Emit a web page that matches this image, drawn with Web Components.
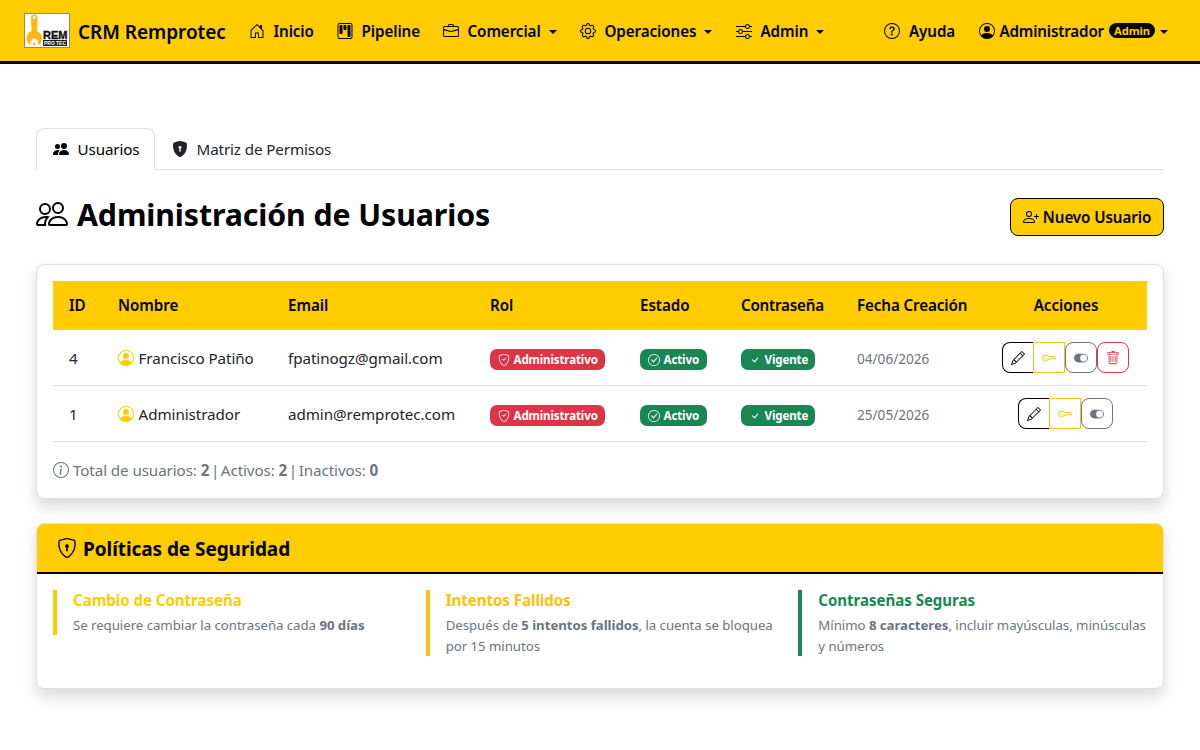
<!DOCTYPE html>
<html lang="es">
<head>
<meta charset="utf-8">
<title>CRM Remprotec - Usuarios</title>
<style>
:root{
    --yellow: #ffcc00;
    --amber: #ffc107;
    --green: #198754;
    --red: #dc3545;
    --grey: #6c757d;
    --line: #dee2e6;
}

body{
    margin: 0;
    background: #fff;
    color: #212529;
    font: 15.2px/24px "Noto Sans", "Open Sans", sans-serif;
    letter-spacing: -0.07px;
}

main{
    padding: 64px 36px 0;
}

.title-row{
    display: flex;
    justify-content: space-between;
    align-items: center;
    height: 46px;
    margin: 24px 0;
}

h1{
    display: flex;
    align-items: center;
    gap: 9px;
    margin: 0 0 4px;
    color: #000;
    font-size: 30.3px;
    font-weight: 700;
    line-height: 38px;
    letter-spacing: -0.11px;

    & crm-icon{ margin-top: -2px; }
}

.total{
    display: flex;
    align-items: center;
    gap: 4px;
    margin-top: 16px;
    color: var(--grey);
    letter-spacing: -0.1px;

    & i{
        margin: 0 -2.2px;
        font-style: normal;
    }
}

.policies{
    display: grid;
    grid-template-columns: repeat(3, 1fr);
    gap: 24px;
    align-items: start;
    padding-bottom: 16px;
}
</style>
</head>
<body>

<crm-navbar>
    <nav-item icon="house" style="width:88px">Inicio</nav-item>
    <nav-item icon="kanban" style="width:106px">Pipeline</nav-item>
    <nav-item icon="briefcase" style="width:137px" menu>Comercial</nav-item>
    <nav-item icon="gear" style="width:156px" menu>Operaciones</nav-item>
    <nav-item icon="sliders" menu>Admin</nav-item>
    <nav-item slot="user" icon="question" style="width:95px">Ayuda</nav-item>
    <nav-item slot="user" icon="person" badge="Admin" menu>Administrador</nav-item>
</crm-navbar>

<main>
    <crm-tabs>
        <crm-tab icon="people-fill" active>Usuarios</crm-tab>
        <crm-tab icon="shield-lock-fill">Matriz de Permisos</crm-tab>
    </crm-tabs>

    <div class="title-row">
        <h1><crm-icon name="people" size="32"></crm-icon>Administración de Usuarios</h1>
        <crm-button icon="person-plus">Nuevo Usuario</crm-button>
    </div>

    <crm-card>
        <user-table>
            <user-row uid="4" name="Francisco Patiño" email="fpatinogz@gmail.com" created="04/06/2026" removable></user-row>
            <user-row uid="1" name="Administrador" email="admin@remprotec.com" created="25/05/2026"></user-row>
        </user-table>
        <div class="total">
            <crm-icon name="info"></crm-icon>
            <span>Total de usuarios: <b>2</b> <i>|</i> Activos: <b>2</b> <i>|</i> Inactivos: <b>0</b></span>
        </div>
    </crm-card>

    <crm-card icon="shield-lock" heading="Políticas de Seguridad">
        <div class="policies">
            <policy-item heading="Cambio de Contraseña" style="--accent:var(--yellow)">Se requiere cambiar la contraseña cada <b>90 días</b></policy-item>
            <policy-item heading="Intentos Fallidos" style="--accent:var(--amber)">Después de <b>5 intentos fallidos</b>, la cuenta se bloquea por 15 minutos</policy-item>
            <policy-item heading="Contraseñas Seguras" style="--accent:var(--green)">Mínimo <b>8 caracteres</b>, incluir mayúsculas, minúsculas y números</policy-item>
        </div>
    </crm-card>
</main>

<script>
const icons = {
    "house": `<path d="M8.354 1.146a.5.5 0 0 0-.708 0l-6 6A.5.5 0 0 0 1.5 7.5v7a.5.5 0 0 0 .5.5h4.5a.5.5 0 0 0 .5-.5v-4h2v4a.5.5 0 0 0 .5.5H14a.5.5 0 0 0 .5-.5v-7a.5.5 0 0 0-.146-.354L13 5.793V2.5a.5.5 0 0 0-.5-.5h-1a.5.5 0 0 0-.5.5v1.293zM2.5 14V7.707l5.5-5.5 5.5 5.5V14H10v-4a.5.5 0 0 0-.5-.5h-3a.5.5 0 0 0-.5.5v4z"/>`,
    "kanban": `<path d="M13.5 1a1 1 0 0 1 1 1v12a1 1 0 0 1-1 1h-11a1 1 0 0 1-1-1V2a1 1 0 0 1 1-1zm-11-1a2 2 0 0 0-2 2v12a2 2 0 0 0 2 2h11a2 2 0 0 0 2-2V2a2 2 0 0 0-2-2z"/><path d="M6.5 3a1 1 0 0 1 1-1h1a1 1 0 0 1 1 1v3a1 1 0 0 1-1 1h-1a1 1 0 0 1-1-1zm-4 0a1 1 0 0 1 1-1h1a1 1 0 0 1 1 1v7a1 1 0 0 1-1 1h-1a1 1 0 0 1-1-1zm8 0a1 1 0 0 1 1-1h1a1 1 0 0 1 1 1v10a1 1 0 0 1-1 1h-1a1 1 0 0 1-1-1z"/>`,
    "briefcase": `<path d="M6.5 1A1.5 1.5 0 0 0 5 2.5V3H1.5A1.5 1.5 0 0 0 0 4.5v8A1.5 1.5 0 0 0 1.5 14h13a1.5 1.5 0 0 0 1.5-1.5v-8A1.5 1.5 0 0 0 14.5 3H11v-.5A1.5 1.5 0 0 0 9.5 1zm0 1h3a.5.5 0 0 1 .5.5V3H6v-.5a.5.5 0 0 1 .5-.5m1.886 6.914L15 7.151V12.5a.5.5 0 0 1-.5.5h-13a.5.5 0 0 1-.5-.5V7.15l6.614 1.764a1.5 1.5 0 0 0 .772 0M1.5 4h13a.5.5 0 0 1 .5.5v1.616L8.129 7.948a.5.5 0 0 1-.258 0L1 6.116V4.5a.5.5 0 0 1 .5-.5"/>`,
    "gear": `<path d="M8 4.754a3.246 3.246 0 1 0 0 6.492 3.246 3.246 0 0 0 0-6.492M5.754 8a2.246 2.246 0 1 1 4.492 0 2.246 2.246 0 0 1-4.492 0"/><path d="M9.796 1.343c-.527-1.79-3.065-1.79-3.592 0l-.094.319a.873.873 0 0 1-1.255.52l-.292-.16c-1.64-.892-3.433.902-2.54 2.541l.159.292a.873.873 0 0 1-.52 1.255l-.319.094c-1.79.527-1.79 3.065 0 3.592l.319.094a.873.873 0 0 1 .52 1.255l-.16.292c-.892 1.64.901 3.434 2.541 2.54l.292-.159a.873.873 0 0 1 1.255.52l.094.319c.527 1.79 3.065 1.79 3.592 0l.094-.319a.873.873 0 0 1 1.255-.52l.292.16c1.64.893 3.434-.902 2.54-2.541l-.159-.292a.873.873 0 0 1 .52-1.255l.319-.094c1.79-.527 1.79-3.065 0-3.592l-.319-.094a.873.873 0 0 1-.52-1.255l.16-.292c.893-1.64-.902-3.433-2.541-2.54l-.292.159a.873.873 0 0 1-1.255-.52zm-2.633.283c.246-.835 1.428-.835 1.674 0l.094.319a1.873 1.873 0 0 0 2.693 1.115l.291-.16c.764-.415 1.6.42 1.184 1.185l-.159.292a1.873 1.873 0 0 0 1.116 2.692l.318.094c.835.246.835 1.428 0 1.674l-.319.094a1.873 1.873 0 0 0-1.115 2.693l.16.291c.415.764-.42 1.6-1.185 1.184l-.291-.159a1.873 1.873 0 0 0-2.693 1.116l-.094.318c-.246.835-1.428.835-1.674 0l-.094-.319a1.873 1.873 0 0 0-2.692-1.115l-.292.16c-.764.415-1.6-.42-1.184-1.185l.159-.291A1.873 1.873 0 0 0 1.945 8.93l-.319-.094c-.835-.246-.835-1.428 0-1.674l.319-.094A1.873 1.873 0 0 0 3.06 4.377l-.16-.292c-.415-.764.42-1.6 1.185-1.184l.292.159a1.873 1.873 0 0 0 2.692-1.115z"/>`,
    "sliders": `<path fill-rule="evenodd" d="M11.5 2a1.5 1.5 0 1 0 0 3 1.5 1.5 0 0 0 0-3M9.05 3a2.5 2.5 0 0 1 4.9 0H16v1h-2.05a2.5 2.5 0 0 1-4.9 0H0V3zM4.5 7a1.5 1.5 0 1 0 0 3 1.5 1.5 0 0 0 0-3M2.05 8a2.5 2.5 0 0 1 4.9 0H16v1H6.95a2.5 2.5 0 0 1-4.9 0H0V8zm9.45 4a1.5 1.5 0 1 0 0 3 1.5 1.5 0 0 0 0-3m-2.45 1a2.5 2.5 0 0 1 4.9 0H16v1h-2.05a2.5 2.5 0 0 1-4.9 0H0v-1z"/>`,
    "question": `<path d="M8 15A7 7 0 1 1 8 1a7 7 0 0 1 0 14m0 1A8 8 0 1 0 8 0a8 8 0 0 0 0 16"/><path d="M5.255 5.786a.237.237 0 0 0 .241.247h.825c.138 0 .248-.113.266-.25.09-.656.54-1.134 1.342-1.134.686 0 1.314.343 1.314 1.168 0 .635-.374.927-.965 1.371-.673.489-1.206 1.06-1.168 1.987l.003.217a.25.25 0 0 0 .25.246h.811a.25.25 0 0 0 .25-.25v-.105c0-.718.273-.927 1.01-1.486.609-.463 1.244-.977 1.244-2.056 0-1.511-1.276-2.241-2.673-2.241-1.267 0-2.655.59-2.75 2.286m1.557 5.763c0 .533.425.927 1.01.927.609 0 1.028-.394 1.028-.927 0-.552-.42-.94-1.029-.94-.584 0-1.009.388-1.009.94"/>`,
    "person": `<path d="M11 6a3 3 0 1 1-6 0 3 3 0 0 1 6 0"/><path fill-rule="evenodd" d="M0 8a8 8 0 1 1 16 0A8 8 0 0 1 0 8m8-7a7 7 0 0 0-5.468 11.37C3.242 11.226 4.805 10 8 10s4.757 1.225 5.468 2.37A7 7 0 0 0 8 1"/>`,
    "people-fill": `<path d="M7 14s-1 0-1-1 1-4 5-4 5 3 5 4-1 1-1 1zm4-6a3 3 0 1 0 0-6 3 3 0 0 0 0 6m-5.784 6A2.24 2.24 0 0 1 5 13c0-1.355.68-2.75 1.936-3.72A6.3 6.3 0 0 0 5 9c-4 0-5 3-5 4s1 1 1 1zM4.5 8a2.5 2.5 0 1 0 0-5 2.5 2.5 0 0 0 0 5"/>`,
    "people": `<path d="M15 14s1 0 1-1-1-4-5-4-5 3-5 4 1 1 1 1zm-7.978-1L7 12.996c.001-.264.167-1.03.76-1.72C8.312 10.629 9.282 10 11 10c1.717 0 2.687.63 3.24 1.276.593.69.758 1.457.76 1.72l-.008.002-.014.002zM11 7a2 2 0 1 0 0-4 2 2 0 0 0 0 4m3-2a3 3 0 1 1-6 0 3 3 0 0 1 6 0M6.936 9.28a6 6 0 0 0-1.23-.247A7 7 0 0 0 5 9c-4 0-5 3-5 4q0 1 1 1h4.216A2.24 2.24 0 0 1 5 13c0-1.01.377-2.042 1.09-2.904.243-.294.526-.569.846-.816M4.92 10A5.5 5.5 0 0 0 4 13H1c0-.26.164-1.03.76-1.724.545-.636 1.492-1.256 3.16-1.275ZM1.5 5.5a3 3 0 1 1 6 0 3 3 0 0 1-6 0m3-2a2 2 0 1 0 0 4 2 2 0 0 0 0-4"/>`,
    "person-plus": `<path d="M6 8a3 3 0 1 0 0-6 3 3 0 0 0 0 6m2-3a2 2 0 1 1-4 0 2 2 0 0 1 4 0m4 8c0 1-1 1-1 1H1s-1 0-1-1 1-4 6-4 6 3 6 4m-1-.004c-.001-.246-.154-.986-.832-1.664C9.516 10.68 8.289 10 6 10s-3.516.68-4.168 1.332c-.678.678-.83 1.418-.832 1.664z"/><path fill-rule="evenodd" d="M13.5 5a.5.5 0 0 1 .5.5V7h1.5a.5.5 0 0 1 0 1H14v1.5a.5.5 0 0 1-1 0V8h-1.5a.5.5 0 0 1 0-1H13V5.5a.5.5 0 0 1 .5-.5"/>`,
    "shield-lock-fill": `<path fill-rule="evenodd" d="M8 0c-.69 0-1.843.265-2.928.56-1.11.3-2.229.655-2.887.87a1.54 1.54 0 0 0-1.044 1.262c-.596 4.477.787 7.795 2.465 9.99a11.8 11.8 0 0 0 2.517 2.453c.386.273.744.482 1.048.625.28.132.581.24.829.24s.548-.108.829-.24a7 7 0 0 0 1.048-.625 11.8 11.8 0 0 0 2.517-2.453c1.678-2.195 3.061-5.513 2.465-9.99a1.54 1.54 0 0 0-1.044-1.263 63 63 0 0 0-2.887-.87C9.843.266 8.69 0 8 0m0 5a1.5 1.5 0 0 1 .5 2.915l.385 1.99a.5.5 0 0 1-.491.595h-.788a.5.5 0 0 1-.49-.595l.384-1.99A1.5 1.5 0 0 1 8 5"/>`,
    "shield": `<path d="M5.338 1.59a61 61 0 0 0-2.837.856.48.48 0 0 0-.328.39c-.554 4.157.726 7.19 2.253 9.188a10.7 10.7 0 0 0 2.287 2.233c.346.244.652.42.893.533q.18.085.293.118a1 1 0 0 0 .101.025 1 1 0 0 0 .1-.025q.114-.034.294-.118c.24-.113.547-.29.893-.533a10.7 10.7 0 0 0 2.287-2.233c1.527-1.997 2.807-5.031 2.253-9.188a.48.48 0 0 0-.328-.39c-.651-.213-1.75-.56-2.837-.855C9.552 1.29 8.531 1.067 8 1.067c-.53 0-1.552.223-2.662.524zM5.072.56C6.157.265 7.31 0 8 0s1.843.265 2.928.56c1.11.3 2.229.655 2.887.87a1.54 1.54 0 0 1 1.044 1.262c.596 4.477-.787 7.795-2.465 9.99a11.8 11.8 0 0 1-2.517 2.453 7 7 0 0 1-1.048.625c-.28.132-.581.24-.829.24s-.548-.108-.829-.24a7 7 0 0 1-1.048-.625 11.8 11.8 0 0 1-2.517-2.453C1.928 10.487.545 7.169 1.141 2.692A1.54 1.54 0 0 1 2.185 1.43 63 63 0 0 1 5.072.56"/>`,
    "circle-check": `<path d="M8 15A7 7 0 1 1 8 1a7 7 0 0 1 0 14m0 1A8 8 0 1 0 8 0a8 8 0 0 0 0 16"/><path d="m10.97 4.97-.02.022-3.473 4.425-2.093-2.094a.75.75 0 0 0-1.06 1.06L6.97 11.03a.75.75 0 0 0 1.079-.02l3.992-4.99a.75.75 0 0 0-1.071-1.05"/>`,
    "check": `<path d="M10.97 4.97a.75.75 0 0 1 1.07 1.05l-3.99 4.99a.75.75 0 0 1-1.08.02L4.324 8.384a.75.75 0 1 1 1.06-1.06l2.094 2.093 3.473-4.425z"/>`,
    "pencil": `<path d="M12.146.146a.5.5 0 0 1 .708 0l3 3a.5.5 0 0 1 0 .708l-10 10a.5.5 0 0 1-.168.11l-5 2a.5.5 0 0 1-.65-.65l2-5a.5.5 0 0 1 .11-.168zM11.207 2.5 13.5 4.793 14.793 3.5 12.5 1.207zm1.586 3L10.5 3.207 4 9.707V10h.5a.5.5 0 0 1 .5.5v.5h.5a.5.5 0 0 1 .5.5v.5h.293zm-9.761 5.175-.106.106-1.528 3.821 3.821-1.528.106-.106A.5.5 0 0 1 5 12.5V12h-.5a.5.5 0 0 1-.5-.5V11h-.5a.5.5 0 0 1-.468-.325"/>`,
    "key": `<path d="M0 8a4 4 0 0 1 7.465-2H14a.5.5 0 0 1 .354.146l1.5 1.5a.5.5 0 0 1 0 .708l-1.5 1.5a.5.5 0 0 1-.708 0L13 9.207l-.646.647a.5.5 0 0 1-.708 0L11 9.207l-.646.647a.5.5 0 0 1-.708 0L9 9.207l-.646.647A.5.5 0 0 1 8 10h-.535A4 4 0 0 1 0 8m4-3a3 3 0 1 0 2.712 4.285A.5.5 0 0 1 7.163 9h.63l.853-.854a.5.5 0 0 1 .708 0l.646.647.646-.647a.5.5 0 0 1 .708 0l.646.647.646-.647a.5.5 0 0 1 .708 0l.646.647.793-.793-1-1h-6.63a.5.5 0 0 1-.451-.285A3 3 0 0 0 4 5"/><path d="M4 8a1 1 0 1 1-2 0 1 1 0 0 1 2 0"/>`,
    "toggle": `<path d="M5 3a5 5 0 0 0 0 10h6a5 5 0 0 0 0-10zm6 9a4 4 0 1 1 0-8 4 4 0 0 1 0 8"/>`,
    "trash": `<path d="M5.5 5.5A.5.5 0 0 1 6 6v6a.5.5 0 0 1-1 0V6a.5.5 0 0 1 .5-.5m2.5 0a.5.5 0 0 1 .5.5v6a.5.5 0 0 1-1 0V6a.5.5 0 0 1 .5-.5m3 .5a.5.5 0 0 0-1 0v6a.5.5 0 0 0 1 0z"/><path d="M14.5 3a1 1 0 0 1-1 1H13v9a2 2 0 0 1-2 2H5a2 2 0 0 1-2-2V4h-.5a1 1 0 0 1-1-1V2a1 1 0 0 1 1-1H6a1 1 0 0 1 1-1h2a1 1 0 0 1 1 1h3.5a1 1 0 0 1 1 1zM4.118 4 4 4.059V13a1 1 0 0 0 1 1h6a1 1 0 0 0 1-1V4.059L11.882 4zM2.5 3h11V2h-11z"/>`,
    "info": `<path d="M8 15A7 7 0 1 1 8 1a7 7 0 0 1 0 14m0 1A8 8 0 1 0 8 0a8 8 0 0 0 0 16"/><path d="m8.93 6.588-2.29.287-.082.38.45.083c.294.07.352.176.288.469l-.738 3.468c-.194.897.105 1.319.808 1.319.545 0 1.178-.252 1.465-.598l.088-.416c-.2.176-.492.246-.686.246-.275 0-.375-.193-.304-.533zM9 4.5a1 1 0 1 1-2 0 1 1 0 0 1 2 0"/>`
};
icons["shield-lock"] = icons["shield"] + `<path d="M9.5 6.5a1.5 1.5 0 0 1-1 1.415l.385 1.99a.5.5 0 0 1-.491.595h-.788a.5.5 0 0 1-.49-.595l.384-1.99a1.5 1.5 0 1 1 2-1.415"/>`;
icons["shield-check"] = icons["shield"] + `<path d="M10.854 5.146a.5.5 0 0 1 0 .708l-3 3a.5.5 0 0 1-.708 0l-1.5-1.5a.5.5 0 1 1 .708-.708L7.5 7.793l2.646-2.647a.5.5 0 0 1 .708 0"/>`;

class CrmIcon extends HTMLElement
{
    constructor()
    {
        super();
        const size = this.getAttribute("size") || 16;

        this.attachShadow({ mode : "open" }).innerHTML =
        `
        <style>
        :host{ display: block; flex: none; }
        svg{ display: block; }
        </style>
        <svg width="${size}" height="${size}" viewBox="0 0 16 16" fill="currentColor">${icons[this.getAttribute("name")]}</svg>
        `
    }
}
window.customElements.define('crm-icon', CrmIcon);


class CrmNavbar extends HTMLElement
{
    constructor()
    {
        super();
        this.attachShadow({ mode : "open" }).innerHTML =
        `
        <style>
        :host{
            display: flex;
            align-items: center;
            box-sizing: border-box;
            height: 64px;
            padding: 0 32px 0 24px;
            background: var(--yellow);
            border-bottom: 3px solid #000;
            color: #000;
        }

        .logo{
            display: block;
            margin-right: 8px;
            overflow: visible;
            letter-spacing: 0;
        }

        .brand{
            width: 171px;
            font-size: 19px;
            font-weight: 600;
            white-space: nowrap;
            padding-top: 2px;
            letter-spacing: -0.04px;
        }

        nav{
            display: flex;
            flex: 1;
        }

        .user{
            display: flex;
        }
        </style>

        <svg class="logo" width="46" height="36" viewBox="0 0 46 36">
            <rect x=".5" y=".5" width="45" height="34" fill="#fff" stroke="#8f8a70"/>
            <path fill="#fdb813" d="M10.3 1.6c-1.9 0-3.3 1.3-3.3 3.2l.6 13.3c-3 1.2-5 4-5 7.2 0 3.1 1.7 5.700 4.100 7.100v-4l1.700-2.600h3.800l1.700 2.600v4c2.400-1.400 4.100-4 4.100-7.100 0-3.200-2-6-5-7.200l.6-13.300c0-1.900-1.400-3.200-3.300-3.200zm0 1.500a1.400 1.400 0 1 1 0 2.800 1.400 1.400 0 0 1 0-2.800z"/>
            <circle cx="10.3" cy="31" r="1.3" fill="#fdb813"/>
            <text x="19" y="26" font-family="Liberation Sans" font-size="11.5" font-weight="700" fill="#111" stroke="#111" stroke-width=".4" textLength="24.500" lengthAdjust="spacingAndGlyphs">REM</text>
            <path fill="#222" d="M19 27h24v6H19z"/>
            <text x="20" y="32.100" font-family="Liberation Sans" font-size="6" font-weight="700" fill="#fff" textLength="22" lengthAdjust="spacingAndGlyphs">PRO TEC</text>
        </svg>
        <div class="brand">CRM Remprotec</div>
        <nav><slot></slot></nav>
        <div class="user"><slot name="user"></slot></div>
        `
    }
}
window.customElements.define('crm-navbar', CrmNavbar);


class NavItem extends HTMLElement
{
    constructor()
    {
        super();
        const badge = this.getAttribute("badge");

        this.attachShadow({ mode : "open" }).innerHTML =
        `
        <style>
        :host{
            display: flex;
            align-items: center;
            font-weight: 600;
            white-space: nowrap;
        }

        .text{
            margin-left: ${badge ? 4 : 8.5}px;
            padding-top: 1px;
            letter-spacing: ${badge ? -0.18 : -0.09}px;
        }

        .badge{
            margin-left: 5px;
            padding: 0 5px;
            border-radius: 8px;
            background: #000;
            color: var(--yellow);
            font-size: 11.2px;
            font-weight: 700;
            line-height: 15px;
        }

        .caret{
            margin: 2px 0 0 ${badge ? 5 : 8}px;
            border: 4.5px solid transparent;
            border-top-color: currentColor;
            border-bottom: 0;
        }
        </style>

        <crm-icon name="${this.getAttribute("icon")}"></crm-icon>
        <span class="text"><slot></slot></span>
        ${badge ? `<span class="badge">${badge}</span>` : ""}
        ${this.hasAttribute("menu") ? `<i class="caret"></i>` : ""}
        `
    }
}
window.customElements.define('nav-item', NavItem);


class CrmTabs extends HTMLElement
{
    constructor()
    {
        super();
        this.attachShadow({ mode : "open" }).innerHTML =
        `
        <style>
        :host{
            display: flex;
            height: 41px;
            border-bottom: 1px solid var(--line);
        }
        </style>
        <slot></slot>
        `
    }
}
window.customElements.define('crm-tabs', CrmTabs);


class CrmTab extends HTMLElement
{
    constructor()
    {
        super();
        this.attachShadow({ mode : "open" }).innerHTML =
        `
        <style>
        :host{
            display: flex;
            align-items: center;
            gap: 8.5px;
            box-sizing: border-box;
            height: 42px;
            padding: 0 16px 1px;
            border: 1px solid transparent;
            border-bottom: 0;
            border-radius: 8px 8px 0 0;
            letter-spacing: -0.12px;
        }

        :host([active]){
            width: 119px;
            background: #fff;
            border-color: var(--line);
            color: #000;
        }
        </style>
        <crm-icon name="${this.getAttribute("icon")}"></crm-icon>
        <span><slot></slot></span>
        `
    }
}
window.customElements.define('crm-tab', CrmTab);


class CrmButton extends HTMLElement
{
    constructor()
    {
        super();
        this.attachShadow({ mode : "open" }).innerHTML =
        `
        <style>
        :host{
            display: flex;
            align-items: center;
            justify-content: center;
            gap: 4px;
            box-sizing: border-box;
            width: 154px;
            height: 38px;
            border: 1px solid #000;
            border-radius: 8px;
            background: var(--yellow);
            color: #000;
            font-weight: 600;
            letter-spacing: -0.1px;
        }
        </style>
        <crm-icon name="${this.getAttribute("icon")}"></crm-icon>
        <span><slot></slot></span>
        `
    }
}
window.customElements.define('crm-button', CrmButton);


class CrmCard extends HTMLElement
{
    constructor()
    {
        super();
        const heading = this.getAttribute("heading");

        this.attachShadow({ mode : "open" }).innerHTML =
        `
        <style>
        :host{
            display: block;
            margin-bottom: 24px;
            border: 1px solid #dfdfdf;
            border-radius: 8px;
            background: #fff;
            box-shadow: 0 8px 16px rgba(0, 0, 0, 0.15);
        }

        header{
            display: flex;
            align-items: center;
            gap: 6px;
            height: 48px;
            padding: 0 20px;
            border-bottom: 2px solid #000;
            border-radius: 7px 7px 0 0;
            background: var(--yellow);
            color: #000;
            font-size: 19px;
            font-weight: 700;

            & span{ padding-top: 2px; }
        }

        .body{ padding: 16px; }
        </style>

        ${heading ? `<header><crm-icon name="${this.getAttribute("icon")}" size="20"></crm-icon><span>${heading}</span></header>` : ""}
        <div class="body"><slot></slot></div>
        `
    }
}
window.customElements.define('crm-card', CrmCard);


class UserTable extends HTMLElement
{
    constructor()
    {
        super();
        this.attachShadow({ mode : "open" }).innerHTML =
        `
        <style>
        :host{
            display: block;
            --columns: 49px 170px 202px 150px 101px 116px 144px 1fr;
        }

        .head{
            display: grid;
            grid-template-columns: var(--columns);
            align-items: center;
            height: 48px;
            border-bottom: 1px solid #d9cf9a;
            background: var(--yellow);
            color: #000;
            font-weight: 600;
        }

        span{ padding-left: 16px; }
        span:nth-child(6){ letter-spacing: -0.22px; }
        span:nth-child(7){ letter-spacing: -0.12px; }
        span:last-child{ padding: 0; text-align: center; }
        </style>

        <div class="head">
            <span>ID</span>
            <span>Nombre</span>
            <span>Email</span>
            <span>Rol</span>
            <span>Estado</span>
            <span>Contraseña</span>
            <span>Fecha Creación</span>
            <span>Acciones</span>
        </div>
        <slot></slot>
        `
    }
}
window.customElements.define('user-table', UserTable);


class UserRow extends HTMLElement
{
    constructor()
    {
        super();
        this.attachShadow({ mode : "open" }).innerHTML =
        `
        <style>
        :host{
            display: grid;
            grid-template-columns: var(--columns);
            align-items: center;
            height: 55px;
            border-bottom: 1px solid var(--line);
        }

        .cell{ padding-left: 16px; }

        .name{
            display: flex;
            align-items: center;
            gap: 4.5px;

            & crm-icon{ color: var(--yellow); }
        }

        .date{
            color: var(--grey);
            font-size: 13.6px;
            letter-spacing: 0;
            padding-top: 3px;
        }

        .actions{
            display: flex;
            justify-content: center;
            padding-right: 2px;
        }
        </style>

        <div class="cell">${this.getAttribute("uid")}</div>
        <div class="cell name"><crm-icon name="person"></crm-icon><span>${this.getAttribute("name")}</span></div>
        <div class="cell">${this.getAttribute("email")}</div>
        <div class="cell"><state-badge icon="shield-check" color="red" style="width:115px">Administrativo</state-badge></div>
        <div class="cell"><state-badge icon="circle-check" color="green" style="width:67px">Activo</state-badge></div>
        <div class="cell"><state-badge icon="check" color="green" style="width:74px">Vigente</state-badge></div>
        <div class="cell date">${this.getAttribute("created")}</div>
        <div class="actions">
            <action-button icon="pencil" style="color:#000;border-radius:8px 0 0 8px;border-right:0;width:31px"></action-button>
            <action-button icon="key" style="color:var(--amber);border-radius:0"></action-button>
            <action-button icon="toggle" style="color:var(--grey)"></action-button>
            ${this.hasAttribute("removable") ? `<action-button icon="trash" style="color:var(--red)"></action-button>` : ""}
        </div>
        `
    }
}


class StateBadge extends HTMLElement
{
    constructor()
    {
        super();
        this.attachShadow({ mode : "open" }).innerHTML =
        `
        <style>
        :host{
            display: flex;
            align-items: center;
            gap: 4px;
            box-sizing: border-box;
            height: 21px;
            margin-top: 4px;
            padding-left: 7.5px;
            border-radius: 7px;
            background: var(--${this.getAttribute("color")});
            color: #fff;
            font-size: 11.6px;
            font-weight: 700;
            line-height: 21px;
            white-space: nowrap;
            letter-spacing: -0.14px;
        }
        </style>
        <crm-icon name="${this.getAttribute("icon")}" size="12"></crm-icon>
        <span><slot></slot></span>
        `
    }
}


class ActionButton extends HTMLElement
{
    constructor()
    {
        super();
        this.attachShadow({ mode : "open" }).innerHTML =
        `
        <style>
        :host{
            display: flex;
            align-items: center;
            justify-content: center;
            box-sizing: border-box;
            width: 32px;
            height: 31px;
            border: 1px solid currentColor;
            border-radius: 8px;
        }
        </style>
        <crm-icon name="${this.getAttribute("icon")}" size="14"></crm-icon>
        `
    }
}
window.customElements.define('action-button', ActionButton);
window.customElements.define('state-badge', StateBadge);
window.customElements.define('user-row', UserRow);


class PolicyItem extends HTMLElement
{
    constructor()
    {
        super();
        this.attachShadow({ mode : "open" }).innerHTML =
        `
        <style>
        :host{
            display: block;
            padding-left: 16px;
            border-left: 4px solid var(--accent);
            color: var(--grey);
            font-size: 13.25px;
            line-height: 21px;
            letter-spacing: -0.05px;
        }

        h6{
            margin: 0;
            color: var(--accent);
            font-size: 15.1px;
            font-weight: 700;
            line-height: 20px;
            padding-bottom: 4px;
        }

        p{
            margin: 0;
            padding-top: 1px;
            margin-bottom: -1px;
        }
        </style>
        <h6>${this.getAttribute("heading")}</h6>
        <p><slot></slot></p>
        `
    }
}
window.customElements.define('policy-item', PolicyItem);
</script>
</body>
</html>
